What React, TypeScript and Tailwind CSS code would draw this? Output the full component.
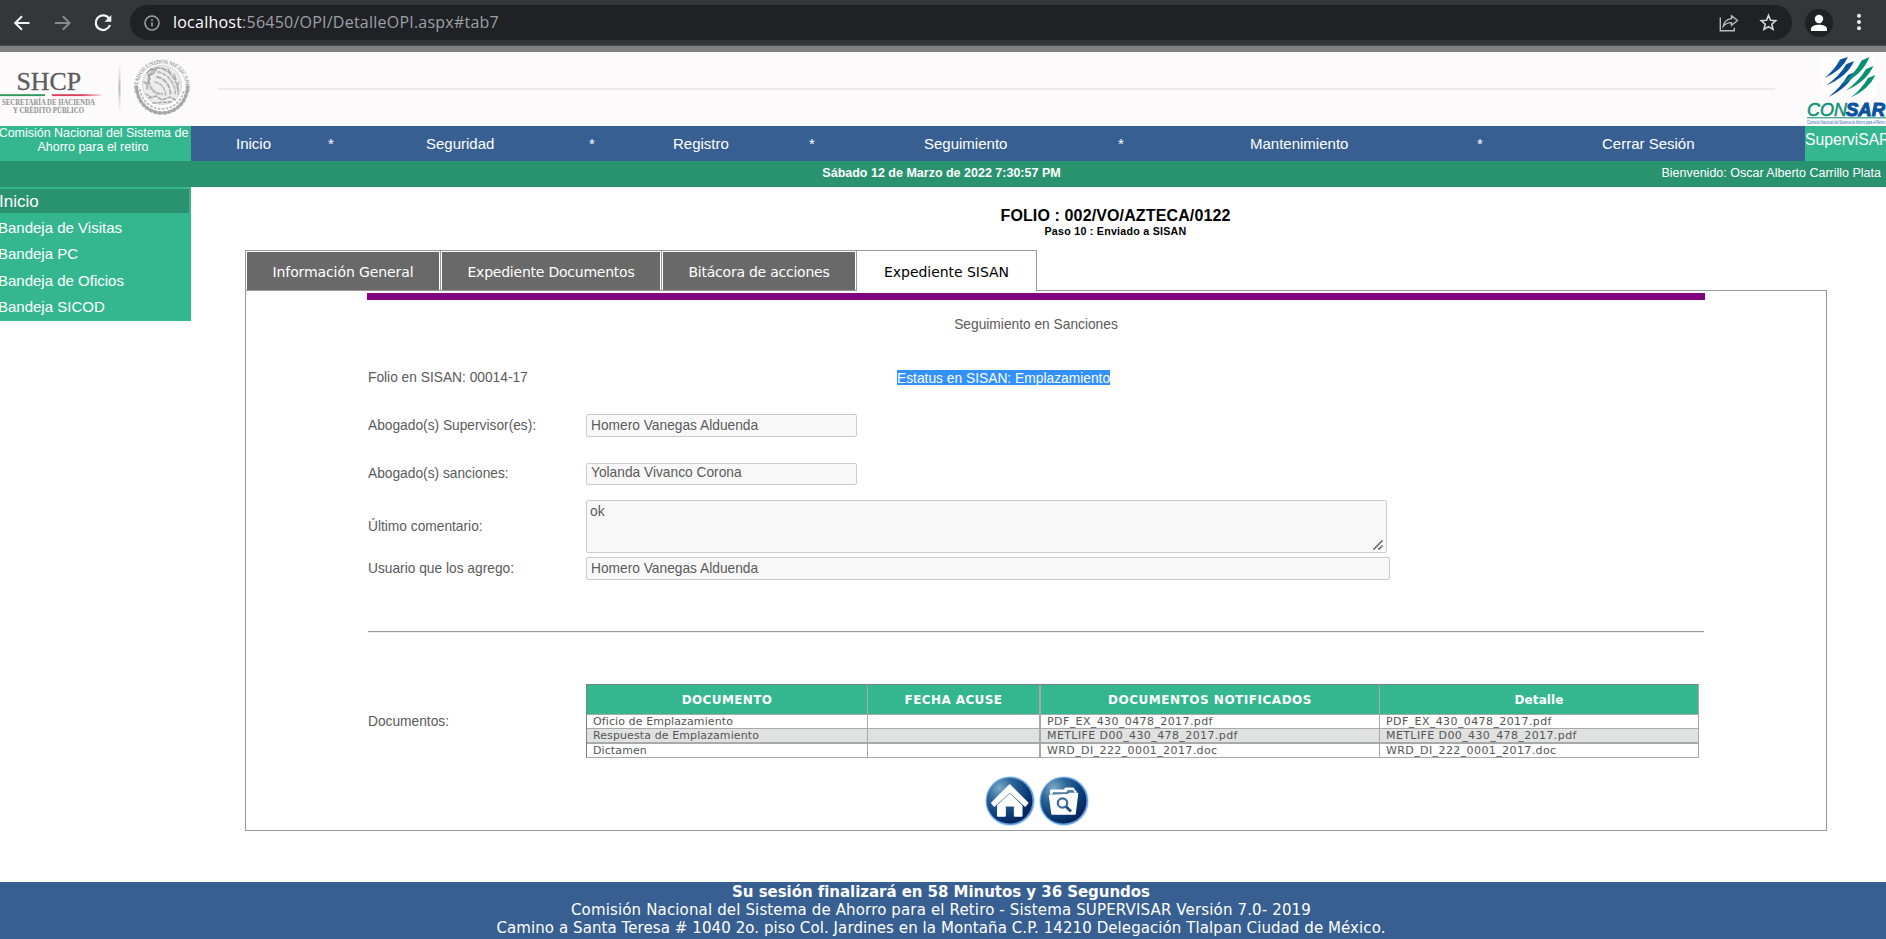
import type { ReactNode } from "react";

const sans = "font-['Liberation_Sans',sans-serif]";
const verdana = "font-['DejaVu_Sans',sans-serif]";

function BrowserBar() {
  return (
    <div className="flex h-[46px] shrink-0 items-start border-b border-[#4a4b4e] bg-[#35363a]">
      <div className="flex h-[45px] w-[130px] shrink-0 items-center pl-[12px]">
        <svg width="20" height="20" viewBox="0 0 20 20" fill="none" stroke="#f1f3f4" strokeWidth="2">
          <path d="M17.500 10H3.500M10 3.200L3.200 10l6.800 6.800" />
        </svg>
        <svg className="ml-[21px]" width="20" height="20" viewBox="0 0 20 20" fill="none" stroke="#86888b" strokeWidth="2">
          <path d="M2 10h14.500M9.800 3.200l6.800 6.800-6.800 6.800" />
        </svg>
        <svg className="ml-[20px]" width="20" height="20" viewBox="0 0 20 20">
          <path d="M15.800 5.200A7.300 7.300 0 1 0 17 12" fill="none" stroke="#f1f3f4" strokeWidth="2.200" />
          <path d="M18.300 2v6.800h-6.800z" fill="#f1f3f4" />
        </svg>
      </div>
      <div className="mt-[5px] flex h-[35px] w-[1662px] items-center rounded-full bg-[#202124] pl-[14px] pr-[13px]">
        <svg width="16" height="16" viewBox="0 0 16 16" fill="none" stroke="#9aa0a6" strokeWidth="1.600">
          <circle cx="8" cy="8" r="7" />
          <path d="M8 7.200v4.200M8 4.300v1.700" />
        </svg>
        <div className="ml-[13px] grow pb-px font-['Open_Sans',sans-serif] text-[16px] leading-[20px] tracking-[0.23px] text-[#9aa0a6]">
          <span className="text-white">localhost</span>:56450/OPI/DetalleOPI.aspx#tab7
        </div>
        <svg width="20" height="18" viewBox="0 0 20 18" fill="none" stroke="#b9bbbd" strokeWidth="1.400" strokeLinejoin="miter">
          <path d="M1.300 3.500v13.300h14v-3" />
          <path d="M12.500 1.800l6 4.700-6 4.700V8.600c-3.500-.1-6 1-8.200 3.600.8-4.500 3.700-7.200 8.200-7.600z" />
        </svg>
        <svg className="ml-[20px]" width="19" height="19" viewBox="0 0 19 19" fill="none" stroke="#d5d7d9" strokeWidth="1.600">
          <path d="M9.500 2.300l2 4.900 5.300.5-4 3.500 1.200 5.200-4.500-2.800-4.500 2.800 1.200-5.200-4-3.500 5.300-.5z" />
        </svg>
        <span className="w-px" />
      </div>
      <svg className="mt-[9px] ml-[13px]" width="28" height="28" viewBox="0 0 28 28">
        <circle cx="14" cy="14" r="14" fill="#202124" />
        <circle cx="14" cy="10" r="4.200" fill="#fff" />
        <path d="M6 22v-2c0-3 4.500-4.300 8-4.300s8 1.300 8 4.300v2z" fill="#fff" />
      </svg>
      <svg className="mt-[13px] ml-[23px]" width="6" height="18" viewBox="0 0 6 18" fill="#f1f3f4">
        <circle cx="3" cy="2.800" r="2" />
        <circle cx="3" cy="9" r="2" />
        <circle cx="3" cy="15.200" r="2" />
      </svg>
    </div>
  );
}

function ShcpLogo() {
  return (
    <svg width="200" height="73" viewBox="0 53 200 73">
      <defs>
        <linearGradient id="sep" x1="0" y1="0" x2="0" y2="1">
          <stop offset="0" stopColor="#ccc" stopOpacity="0" />
          <stop offset="0.500" stopColor="#b4b4b4" />
          <stop offset="1" stopColor="#ccc" stopOpacity="0" />
        </linearGradient>
        <linearGradient id="redline" x1="0" y1="0" x2="1" y2="0">
          <stop offset="0.600" stopColor="#d9405f" />
          <stop offset="1" stopColor="#d9405f" stopOpacity="0.200" />
        </linearGradient>
        <path id="sealTop" d="M138.500 92.500A24 24 0 1 1 185.500 92.500" />
      </defs>
      <text x="16.500" y="90" fontSize="24.500" textLength="64.500" lengthAdjust="spacingAndGlyphs" fill="#5c5c5c" stroke="#5c5c5c" strokeWidth="0.300" className="font-['Liberation_Serif',serif]">SHCP</text>
      <rect x="0" y="94.200" width="45" height="1.900" fill="#2f9a5b" />
      <rect x="52" y="94.200" width="49" height="1.900" fill="url(#redline)" />
      <text x="2" y="104.600" fontSize="7.500" fontWeight="700" textLength="93" lengthAdjust="spacingAndGlyphs" fill="#909090" className="font-['Liberation_Serif',serif]">SECRETARÍA DE HACIENDA</text>
      <text x="13" y="112.800" fontSize="7.500" fontWeight="700" textLength="71" lengthAdjust="spacingAndGlyphs" fill="#909090" className="font-['Liberation_Serif',serif]">Y CRÉDITO PÚBLICO</text>
      <rect x="118.500" y="64" width="2" height="48" fill="url(#sep)" />
      <text fontSize="6" fontWeight="700" fill="#a3a3a3" className="font-['Liberation_Serif',serif]">
        <textPath href="#sealTop" textLength="84">ESTADOS UNIDOS MEXICANOS</textPath>
      </text>
      <circle cx="162" cy="85" r="19.500" fill="#ececec" stroke="#cfcfcf" strokeWidth="0.800" />
      <g fill="none" stroke="#a8a8a8" strokeLinecap="round">
        <path d="M136.500 87c.5 14 11 26 25.500 26s25-12 25.500-26" strokeWidth="3.600" strokeDasharray="1.500 3.200" />
        <path d="M140 90c2 11 11 19 22 19s20-8 22-19" strokeWidth="2" strokeDasharray="0.800 3.200" stroke="#bdbdbd" />
        <path d="M153 70c-4 5-6 10-3 16s7 8 12 8" strokeWidth="2.600" stroke="#bcbcbc" strokeDasharray="2 2.600" />
        <path d="M156 68c7-1 13 3 17 9s6 12 5 17" strokeWidth="1.800" stroke="#b0b0b0" strokeDasharray="4 2.400" />
        <path d="M158 72c6 1 11 5 14 10s4 9 3 13" strokeWidth="1.800" stroke="#bababa" strokeDasharray="3 2.400" />
        <path d="M157 77c5 1 9 4 11 8s3 7 2 11" strokeWidth="1.800" stroke="#ababab" strokeDasharray="4 2.400" />
        <path d="M155 82c4 1 7 3 9 7s2 5 1 7" strokeWidth="1.600" stroke="#b6b6b6" strokeDasharray="3 2" />
        <path d="M147 73l4-4 5 .500-3 4.500-5 1 2 4-3 5" strokeWidth="1.300" stroke="#9c9c9c" />
        <path d="M144 82c3 1 4 4 3 8M149 98l7-2 6 4 8-3 6 3M153 103l18-1" strokeWidth="1.600" strokeDasharray="3 2.200" />
        <path d="M162 68l4 3M168 69l3 5M174 74l2 6M179 82l-2 6M146 94l6 4" strokeWidth="1.200" />
      </g>
    </svg>
  );
}

function ConsarLogo() {
  return (
    <svg width="81" height="73" viewBox="1805 53 81 73">
      <path d="M1820 57h54l3 40h-53z" fill="#fff" />
      <g fill="#0a539f" transform="translate(-1 0)">
        <path d="M1849 57l-8 2.500q-5.500 10.500-15.500 18.500q17.500-7.500 23.500-21z" />
        <path d="M1855 61l-7.500 3q-7.500 12.500-20.500 21.500q21.500-9 28-24.500z" />
        <path d="M1856 72l-7 3q-7 12-19.500 22q20.500-10 26.500-25z" />
      </g>
      <g fill="#0a9173" transform="translate(-0.500 0)">
        <path d="M1870 57l-8 3.500q-6.500 13.500-20.500 24q21.500-9.500 28.500-27.500z" />
        <path d="M1874 66l-7.500 3q-7 12-20 21.500q20-8.500 27.500-24.500z" />
        <path d="M1876 75l-7.500 3q-6 10.500-17 19.500q18-8.500 24.500-22.500z" />
      </g>
      <text x="1807" y="116" fontSize="19" fontStyle="italic" textLength="40" lengthAdjust="spacingAndGlyphs" fill="#0a9173" stroke="#0a9173" strokeWidth="0.500" className="font-['Liberation_Sans',sans-serif]">CON</text>
      <text x="1846" y="116" fontSize="19" fontWeight="900" fontStyle="italic" textLength="39" lengthAdjust="spacingAndGlyphs" fill="#0a539f" stroke="#0a539f" strokeWidth="1.100" className="font-['Liberation_Sans',sans-serif]">SAR</text>
      <rect x="1807" y="117.300" width="79" height="1" fill="#0a9173" />
      <text x="1807" y="124" fontSize="5.500" textLength="78" lengthAdjust="spacingAndGlyphs" fill="#2f73b3" className="font-['Liberation_Sans',sans-serif]">Comisión Nacional del Sistema de Ahorro para el Retiro</text>
    </svg>
  );
}

function SiteHeader() {
  return (
    <header className="flex h-[80px] shrink-0 items-start border-t-[6px] border-[#808080] bg-[#fcfafb]">
      <div className="mt-px flex h-[73px] w-full items-start">
        <ShcpLogo />
        <div className="mt-[35px] ml-[18px] h-[2px] w-[1557px] bg-[#ebebeb]" />
        <div className="ml-auto"><ConsarLogo /></div>
      </div>
    </header>
  );
}

function TopNav() {
  return (
    <nav className={`flex h-[35px] shrink-0 text-white ${sans}`}>
      <div className="h-full w-[191px] shrink-0 bg-[#34b78f] text-center text-[12.500px] leading-[14px] whitespace-nowrap">
        <div className="-ml-[4px] tracking-[-0.02px]">Comisión Nacional del Sistema de</div>
        <div className="-ml-[5px]">Ahorro para el retiro</div>
      </div>
      <div className="flex h-full grow items-center bg-[#375f91] pt-[2px] pl-[45px] text-[15px]">
        <span className="w-[92px]">Inicio</span>
        <span className="w-[98px]">*</span>
        <span className="w-[163px]">Seguridad</span>
        <span className="w-[84px]">*</span>
        <span className="w-[136px]">Registro</span>
        <span className="w-[115px]">*</span>
        <span className="w-[194px]">Seguimiento</span>
        <span className="w-[132px]">*</span>
        <span className="w-[227px]">Mantenimiento</span>
        <span className="w-[125px]">*</span>
        <span>Cerrar Sesión</span>
      </div>
      <div className="h-full w-[81px] shrink-0 overflow-hidden bg-[#34b78f] pt-[5px] text-[15.700px] leading-[18px] whitespace-nowrap">SuperviSAR</div>
    </nav>
  );
}

function StatusBar() {
  return (
    <div className={`grid h-[26px] shrink-0 grid-cols-[1fr_auto_1fr] items-center bg-[#29926f] pr-[5px] pb-[2px] text-[12.500px] text-white ${sans}`}>
      <span />
      <span className="pl-[2px] font-bold">Sábado 12 de Marzo de 2022 7:30:57 PM</span>
      <span className="text-right">Bienvenido: Oscar Alberto Carrillo Plata</span>
    </div>
  );
}

function Sidebar() {
  const links = ["Bandeja de Visitas", "Bandeja PC", "Bandeja de Oficios", "Bandeja SICOD"];
  return (
    <aside className={`h-[134px] w-[191px] shrink-0 bg-[#34b78f] pt-[2px] text-[15px] text-white ${sans}`}>
      <div className="mr-[2px] flex h-[24px] items-center bg-[#29926f] pt-px text-[17px]">
        <span className="-ml-px">Inicio</span>
      </div>
      {links.map((l) => (
        <div key={l} className="flex h-[26.400px] items-center pt-[4px]">
          <span className="-ml-[2px]">{l}</span>
        </div>
      ))}
    </aside>
  );
}

function Tab({ label, className, text }: { label: string; className: string; text: string }) {
  return (
    <div className={`h-[40px] border-l border-l-[#999] ${className}`}>
      <div className="h-full border-x border-t border-white">
        <div className="flex h-[39px] items-center justify-center bg-[#696969] pt-px whitespace-nowrap text-white">
          <span className={text}>{label}</span>
        </div>
      </div>
    </div>
  );
}

function Tabs() {
  return (
    <div className={`-mb-px flex text-[14px] ${verdana}`}>
      <div className="flex border-t border-[#999]">
        <Tab label="Información General" className="w-[195px]" text="tracking-[-0.1px]" />
        <Tab label="Expediente Documentos" className="w-[221px]" text="tracking-[-0.23px]" />
        <Tab label="Bitácora de acciones" className="w-[195px]" text="tracking-[-0.24px]" />
        <div className="relative z-10 flex h-[40px] w-[181px] items-center justify-center border-x border-[#999] bg-white pt-[2px] text-black">
          <span className="tracking-[-0.04px]">Expediente SISAN</span>
        </div>
      </div>
    </div>
  );
}

function Field({ children, className }: { children: ReactNode; className: string }) {
  return (
    <div className={`flex items-center rounded-[2px] border border-[#ccc] bg-[#f8f8f8] pl-[4px] ${className}`}>{children}</div>
  );
}

function Row({ label, className, children }: { label: string; className: string; children: ReactNode }) {
  return (
    <div className={`flex items-center ${className}`}>
      <div className="w-[218px] shrink-0 pt-[2px]">{label}</div>
      {children}
    </div>
  );
}

const docs = [
  ["Oficio de Emplazamiento", "PDF_EX_430_0478_2017.pdf"],
  ["Respuesta de Emplazamiento", "METLIFE D00_430_478_2017.pdf"],
  ["Dictamen", "WRD_DI_222_0001_2017.doc"],
];

function DocsTable() {
  const cols = "grid grid-cols-[281px_173px_339px_318px]";
  return (
    <div className={`w-[1113px] border border-t-[#808080] border-r-[#a9a9a9] border-b-[#a9a9a9] border-l-[#808080] ${verdana}`}>
      <div className={`${cols} h-[29px] bg-[#34b78f] text-center text-[12px] leading-[31px] font-bold text-white`}>
        <div className="border-r border-[#a9a9a9] tracking-[0.36px]">DOCUMENTO</div>
        <div className="border-r-2 border-[#a9a9a9] tracking-[0.4px]">FECHA ACUSE</div>
        <div className="border-r border-[#a9a9a9] tracking-[0.52px]">DOCUMENTOS NOTIFICADOS</div>
        <div className="tracking-[0.1px]">Detalle</div>
      </div>
      {docs.map(([name, file], i) => (
        <div
          key={name}
          className={`${cols} text-[11px] leading-[14px] text-[#555] ${i === 1 ? "h-[14px] border-t bg-[#e0e2e1]" : i === 2 ? "h-[15px] border-t-2" : "h-[14px] border-t"} border-[#a9a9a9]`}
        >
          <div className="h-full border-r border-[#a9a9a9] pl-[6px] tracking-[0.1px]">{name}</div>
          <div className="h-full border-r-2 border-[#a9a9a9]" />
          <div className="h-full border-r border-[#a9a9a9] pl-[6px] tracking-[0.4px]">{file}</div>
          <div className="h-full pl-[6px] tracking-[0.4px]">{file}</div>
        </div>
      ))}
    </div>
  );
}

function RoundIcon({ id, children }: { id: string; children: ReactNode }) {
  return (
    <svg width="50" height="50" viewBox="0 0 50 50">
      <defs>
        <radialGradient id={id} cx="0.280" cy="0.220" r="0.850">
          <stop offset="0" stopColor="#7ba9c9" />
          <stop offset="0.350" stopColor="#2b6699" />
          <stop offset="0.700" stopColor="#0d4079" />
          <stop offset="1" stopColor="#031f55" />
        </radialGradient>
      </defs>
      <circle cx="25" cy="25" r="24.800" fill="#b9d8f2" />
      <circle cx="25" cy="25" r="24" fill="#5b9add" />
      <circle cx="24.600" cy="24.800" r="22.800" fill={`url(#${id})`} />
      {children}
    </svg>
  );
}

function Panel() {
  return (
    <section className={`flex h-[541px] w-[1582px] flex-col items-start border border-[#999] pl-[122px] text-[13.750px] text-[#5a5a5a] ${sans}`}>
      <div className="mt-[2px] -ml-px h-[7px] w-[1338px] bg-[#800080]" />
      <div className="mt-[16px] h-[18px] w-[1336px] text-center leading-[18px]">Seguimiento en Sanciones</div>
      <div className="mt-[34px] flex h-[18px] items-center">
        <div className="w-[529px] pt-[2px]">Folio en SISAN: 00014-17</div>
        <span className="bg-[#3390ff] pt-[2px] leading-[13px] tracking-[0.02px] text-white">Estatus en SISAN: Emplazamiento</span>
      </div>
      <Row label="Abogado(s) Supervisor(es):" className="mt-[27px] h-[24px]">
        <Field className="h-[23px] w-[271px] pt-[2px]">Homero Vanegas Alduenda</Field>
      </Row>
      <Row label="Abogado(s) sanciones:" className="mt-[25px] h-[23px]">
        <Field className="h-[22px] w-[271px]">Yolanda Vivanco Corona</Field>
      </Row>
      <Row label="Último comentario:" className="mt-[15px] h-[53px]">
        <div className="flex h-[53px] w-[801px] justify-between rounded-[2px] border border-[#ccc] bg-[#f8f8f8] pt-[2px] pr-[3px] pb-[2px] pl-[3px] leading-[17px]">
          <span>ok</span>
          <svg className="self-end" width="10" height="10" viewBox="0 0 10 10" stroke="#444" strokeWidth="1.500" strokeDasharray="1.800 0.400">
            <path d="M0.500 9.500L9.500 0.500M5.500 9.500L9.500 5.500" />
          </svg>
        </div>
      </Row>
      <Row label="Usuario que los agrego:" className="mt-[4px] h-[23px]">
        <Field className="h-[23px] w-[804px] pt-px">Homero Vanegas Alduenda</Field>
      </Row>
      <div className="mt-[51px] h-[2px] w-[1336px] border-t border-b border-t-[#999] border-b-[#eee]" />
      <Row label="Documentos:" className="mt-[51px] h-[74px]">
        <DocsTable />
      </Row>
      <div className="mt-[18px] flex w-[1337px] justify-center gap-[4px]">
        <RoundIcon id="homeBg">
          <path d="M7 27L24.700 9.200 42.500 27l-2.300 2.800L24.700 15.500 9.300 29.800z" fill="#fff" stroke="#fff" strokeWidth="1.800" strokeLinejoin="round" />
          <path d="M12.500 29.500L24.700 18 37 29.500v10.700h-7.700V30h-9v10.200h-7.800z" fill="#fff" stroke="#fff" strokeLinejoin="round" />
        </RoundIcon>
        <RoundIcon id="folderBg">
          <path d="M11.500 18v-4h13l2-2h8l1.500 3h1v4z" fill="#fff" stroke="#fff" strokeLinejoin="round" />
          <path d="M13 18.800l1-2.600h13l2.200-2.200h5l2 3.500z" fill="#4d7ca6" />
          <path d="M10.500 19.500h18l2-2h8l-2.500 20.500H13z" fill="#fff" stroke="#fff" strokeWidth="1.500" strokeLinejoin="round" />
          <circle cx="23.500" cy="27" r="4.700" fill="#fff" stroke="#3a6b9f" strokeWidth="2.200" />
          <path d="M27 30.500l5 5" stroke="#1f5187" strokeWidth="2.800" />
        </RoundIcon>
      </div>
    </section>
  );
}

function Footer() {
  return (
    <footer className={`mt-auto h-[57px] shrink-0 bg-[#375f91] pr-[4px] text-center text-[15px] leading-[18px] whitespace-nowrap text-white ${verdana}`}>
      <div className="pt-px font-bold tracking-[-0.04px]">Su sesión finalizará en 58 Minutos y 36 Segundos</div>
      <div className="tracking-[0.146px]">Comisión Nacional del Sistema de Ahorro para el Retiro - Sistema SUPERVISAR Versión 7.0- 2019</div>
      <div className="tracking-[0.08px]">Camino a Santa Teresa # 1040 2o. piso Col. Jardines en la Montaña C.P. 14210 Delegación Tlalpan Ciudad de México.</div>
    </footer>
  );
}

export default function App() {
  return (
    <div className="flex h-[939px] w-[1886px] flex-col overflow-hidden bg-white">
      <BrowserBar />
      <SiteHeader />
      <TopNav />
      <StatusBar />
      <div className="flex items-start">
        <Sidebar />
        <main className="ml-[54px] flex w-[1583px] flex-col items-stretch">
          <div className={`h-[63px] pt-[19px] pl-[158px] text-center font-bold text-black ${sans}`}>
            <div className="text-[16px] leading-[20px] tracking-[0.126px]">FOLIO : 002/VO/AZTECA/0122</div>
            <div className="text-[10.670px] leading-[11px] tracking-[0.255px]">Paso 10 : Enviado a SISAN</div>
          </div>
          <Tabs />
          <div className="flex">
            <Panel />
          </div>
        </main>
      </div>
      <Footer />
    </div>
  );
}
